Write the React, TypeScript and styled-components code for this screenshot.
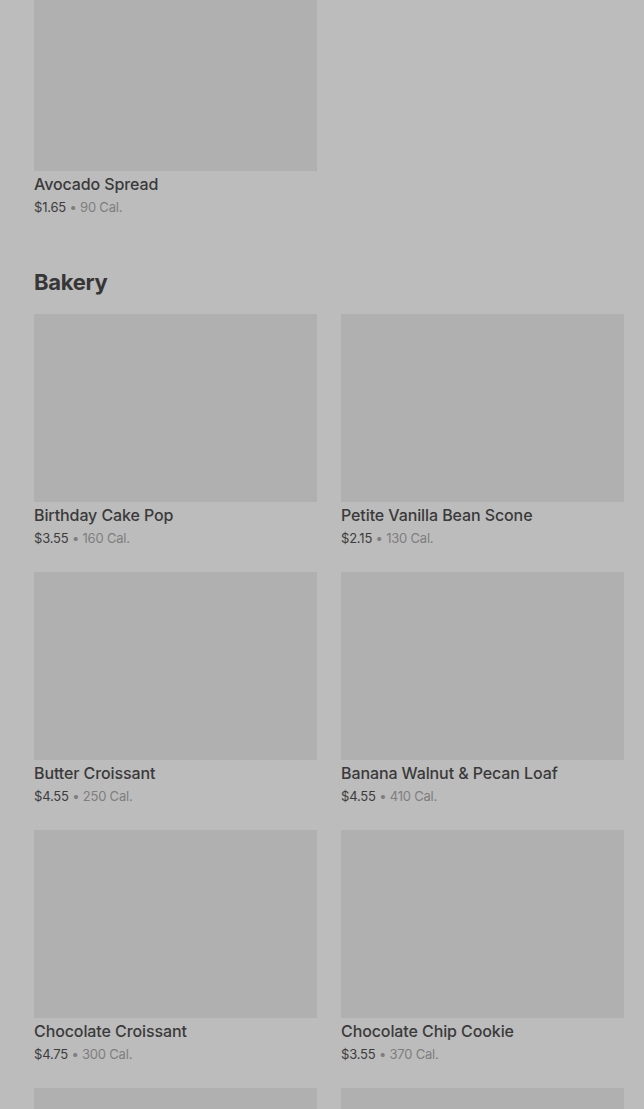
import React from "react";
import styled, { createGlobalStyle } from "styled-components";

const Global = createGlobalStyle`
  html, body { margin: 0; padding: 0; background: #bcbcbc; }
  body { font-family: Inter, "Noto Sans", sans-serif; overflow: hidden; }
`;

const Page = styled.div`
  width: 644px;
  height: 1109px;
  overflow: hidden;
  background: #bcbcbc;
  padding: 0 20px 0 34px;
  box-sizing: border-box;
`;

const Section = styled.section<{ $shift?: number }>`
  margin-top: ${(p) => p.$shift ?? 0}px;
  margin-bottom: 51px;
`;

const Heading = styled.h2`
  margin: 0 0 18px;
  font-size: 22px;
  line-height: 28px;
  font-weight: 700;
  color: #363636;
  letter-spacing: -0.3px;
`;

const Grid = styled.div`
  display: grid;
  grid-template-columns: 283px 283px;
  column-gap: 24px;
  row-gap: 24px;
`;

const Card = styled.div`
  display: flex;
  flex-direction: column;
`;

const Thumb = styled.div`
  height: 188px;
  background: #b0b0b0;
`;

const Title = styled.div`
  margin-top: 3px;
  font-size: 16px;
  line-height: 20px;
  font-weight: 500;
  color: #3a3a3a;
  letter-spacing: -0.1px;
`;

const Meta = styled.div`
  margin-top: 3px;
  font-size: 13px;
  line-height: 20px;
  color: #7e7e7e;
  letter-spacing: -0.2px;
`;

const Price = styled.span`
  color: #3c3c3c;
`;

type Item = { name?: string; price?: string; cal?: string };

const first: Item[] = [{ name: "Avocado Spread", price: "$1.65", cal: "90 Cal." }];

const bakery: Item[] = [
  { name: "Birthday Cake Pop", price: "$3.55", cal: "160 Cal." },
  { name: "Petite Vanilla Bean Scone", price: "$2.15", cal: "130 Cal." },
  { name: "Butter Croissant", price: "$4.55", cal: "250 Cal." },
  { name: "Banana Walnut & Pecan Loaf", price: "$4.55", cal: "410 Cal." },
  { name: "Chocolate Croissant", price: "$4.75", cal: "300 Cal." },
  { name: "Chocolate Chip Cookie", price: "$3.55", cal: "370 Cal." },
  {},
  {},
];

const ItemCard = ({ item }: { item: Item }) => (
  <Card>
    <Thumb />
    {item.name && (
      <>
        <Title>{item.name}</Title>
        <Meta>
          <Price>{item.price}</Price> • {item.cal}
        </Meta>
      </>
    )}
  </Card>
);

export default function App() {
  return (
    <>
      <Global />
      <Page>
        <Section $shift={-17}>
          <Grid>
            {first.map((it, i) => (
              <ItemCard key={i} item={it} />
            ))}
          </Grid>
        </Section>
        <Section>
          <Heading>Bakery</Heading>
          <Grid>
            {bakery.map((it, i) => (
              <ItemCard key={i} item={it} />
            ))}
          </Grid>
        </Section>
      </Page>
    </>
  );
}
